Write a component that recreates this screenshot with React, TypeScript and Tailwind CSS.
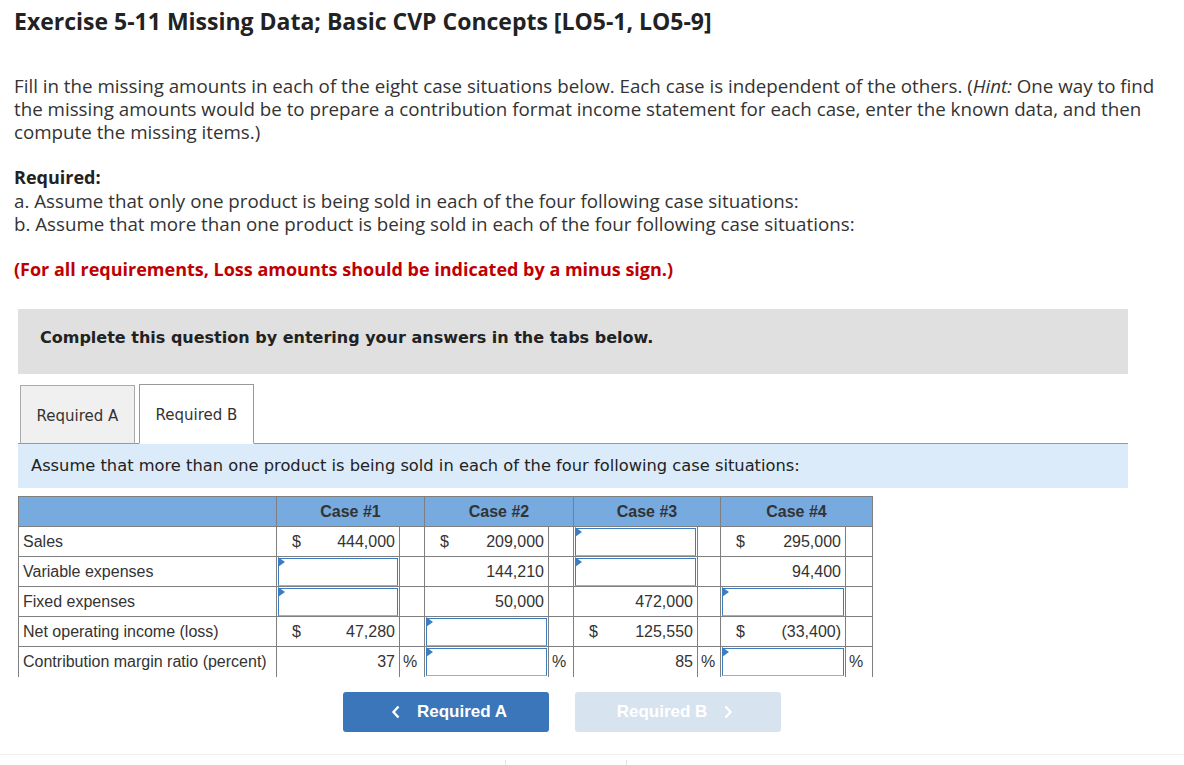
import React from "react";

type Cell =
  | { kind: "val"; dollar?: boolean; text: string }
  | { kind: "input" }
  | { kind: "pct"; text: string }
  | { kind: "blank" };

type Row = { label: string; strong?: boolean; cells: Cell[] };

// each case: [main cell, side cell]
const rows: Row[] = [
  {
    label: "Sales",
    cells: [
      { kind: "val", dollar: true, text: "444,000" }, { kind: "blank" },
      { kind: "val", dollar: true, text: "209,000" }, { kind: "blank" },
      { kind: "input" }, { kind: "blank" },
      { kind: "val", dollar: true, text: "295,000" }, { kind: "blank" },
    ],
  },
  {
    label: "Variable expenses",
    cells: [
      { kind: "input" }, { kind: "blank" },
      { kind: "val", text: "144,210" }, { kind: "blank" },
      { kind: "input" }, { kind: "blank" },
      { kind: "val", text: "94,400" }, { kind: "blank" },
    ],
  },
  {
    label: "Fixed expenses",
    cells: [
      { kind: "input" }, { kind: "blank" },
      { kind: "val", text: "50,000" }, { kind: "blank" },
      { kind: "val", text: "472,000" }, { kind: "blank" },
      { kind: "input" }, { kind: "blank" },
    ],
  },
  {
    label: "Net operating income (loss)",
    strong: true,
    cells: [
      { kind: "val", dollar: true, text: "47,280" }, { kind: "blank" },
      { kind: "input" }, { kind: "blank" },
      { kind: "val", dollar: true, text: "125,550" }, { kind: "blank" },
      { kind: "val", dollar: true, text: "(33,400)" }, { kind: "blank" },
    ],
  },
  {
    label: "Contribution margin ratio (percent)",
    strong: true,
    cells: [
      { kind: "val", text: "37" }, { kind: "pct", text: "%" },
      { kind: "input" }, { kind: "pct", text: "%" },
      { kind: "val", text: "85" }, { kind: "pct", text: "%" },
      { kind: "input" }, { kind: "pct", text: "%" },
    ],
  },
];

const colWidths = ["w-[258px]", "w-[123px]", "w-[25px]", "w-[124px]", "w-[25px]", "w-[124px]", "w-[23px]", "w-[125px]", "w-[27px]"];

function InputBox() {
  return (
    <div className="relative h-[28px] mx-px border-[1.5px] border-[#3c7dc1] border-b-[#8fb3d9] bg-white">
      <span className="absolute -left-[1.5px] -top-[1.5px] w-0 h-0 border-t-[5px] border-b-[5px] border-l-[7px] border-t-transparent border-b-transparent border-l-[#3c7dc1]" />
    </div>
  );
}

function ValueCell({ cell }: { cell: Cell }) {
  if (cell.kind === "input") return <InputBox />;
  if (cell.kind === "val")
    return (
      <div className="flex justify-between items-center pl-[15px] pr-[4px]">
        <span>{cell.dollar ? "$" : ""}</span>
        <span>{cell.text}</span>
      </div>
    );
  if (cell.kind === "pct") return <div className="pl-[3px]">{cell.text}</div>;
  return null;
}

function CaseTable() {
  return (
    <table className="border-collapse table-fixed w-[854px] ml-[18px] font-['Liberation_Sans',Arial,sans-serif] text-[16px] text-[#333]">
      <colgroup>
        {colWidths.map((w, i) => (
          <col key={i} className={w} />
        ))}
      </colgroup>
      <thead>
        <tr className="h-[30px] bg-[#77aadf]">
          <th className="border border-[#7f7f7f]" />
          {["Case #1", "Case #2", "Case #3", "Case #4"].map((c) => (
            <th key={c} colSpan={2} className="border border-[#7f7f7f] font-bold text-[16px] text-[#333]">
              {c}
            </th>
          ))}
        </tr>
      </thead>
      <tbody>
        {rows.map((r, ri) => (
          <tr key={r.label} className="h-[30px]">
            <td
              className={`border-l border-r border-[#7f7f7f] pl-[4px] whitespace-nowrap ${
                ri === rows.length - 1 ? "" : "border-b"
              } border-t border-t-[#7f7f7f]`}
            >
              {r.label}
            </td>
            {r.cells.map((c, ci) => (
              <td
                key={ci}
                className={`p-0 border-l border-r border-[#7f7f7f] ${
                  ri === rows.length - 1 ? "" : "border-b"
                } ${r.strong ? "border-t border-t-black" : "border-t border-t-[#7f7f7f]"}`}
              >
                <ValueCell cell={c} />
              </td>
            ))}
          </tr>
        ))}
      </tbody>
    </table>
  );
}

export default function App() {
  return (
    <div className="w-[1184px] h-[765px] bg-white overflow-hidden relative">
      <div className="px-[14px] pt-[6px] font-['Open_Sans','Lato',sans-serif] text-[#333] whitespace-nowrap">
        <h1 className="text-[23px] font-bold text-[#222] leading-[30px]">
          Exercise 5-11 Missing Data; Basic CVP Concepts [LO5-1, LO5-9]
        </h1>
        <p className="mt-[38px] text-[18.75px] leading-[23px]">
          Fill in the missing amounts in each of the eight case situations below. Each case is independent of the others. (<i>Hint:</i> One way to find
          <br />
          the missing amounts would be to prepare a contribution format income statement for each case, enter the known data, and then
          <br />
          compute the missing items.)
        </p>
        <p className="mt-[23px] text-[18px] leading-[23px] font-bold text-[#222]">Required:</p>
        <p className="text-[18.75px] leading-[23px]">a. Assume that only one product is being sold in each of the four following case situations:</p>
        <p className="text-[18.75px] leading-[23px]">b. Assume that more than one product is being sold in each of the four following case situations:</p>
        <p className="mt-[23px] text-[18px] leading-[23px] font-bold text-[#c00000]">
          (For all requirements, Loss amounts should be indicated by a minus sign.)
        </p>
      </div>

      <div className="mt-[28px] ml-[18px] w-[1110px] h-[65px] bg-[#e0e0e0] flex items-center pl-[22px] pb-[8px] font-['DejaVu_Sans',Verdana,sans-serif] font-bold text-[16px] text-[#222]">
        Complete this question by entering your answers in the tabs below.
      </div>

      <div className="mt-[10px] ml-[18px] w-[1110px] flex items-end border-b border-[#999] font-['DejaVu_Sans',Verdana,sans-serif] text-[15px] text-[#333]">
        <div className="ml-[2px] w-[115px] h-[59px] -mb-px flex items-center justify-center pt-[3px] bg-[#f0f0f0] border border-[#aaa] border-b-[#999]">
          Required A
        </div>
        <div className="ml-[4px] w-[115px] h-[60px] -mb-px flex items-center justify-center pt-[3px] bg-white border border-[#999] border-b-white">
          Required B
        </div>
      </div>

      <div className="ml-[18px] w-[1110px] h-[44px] bg-[#dbebf9] flex items-center pl-[13px] font-['DejaVu_Sans',Verdana,sans-serif] text-[16.3px] text-[#222]">
        Assume that more than one product is being sold in each of the four following case situations:
      </div>

      <div className="mt-[8px]">
        <CaseTable />
      </div>

      <div className="mt-[15px] flex gap-[26px] pl-[343px] font-['Liberation_Sans',Arial,sans-serif] font-bold text-[17px] text-white">
        <button className="w-[206px] h-[40px] rounded-[3px] bg-[#3a76b9] flex items-center justify-center gap-[16px] pl-[6px]">
          <svg width="10" height="14" viewBox="0 0 10 14" fill="none" stroke="white" strokeWidth="2.4">
            <path d="M7.5 1.5 L2.5 7 L7.5 12.5" />
          </svg>
          <span>Required A</span>
        </button>
        <button className="w-[206px] h-[40px] rounded-[3px] bg-[#d8e3f0] flex items-center justify-center gap-[16px] pr-[6px]">
          <span>Required B</span>
          <svg width="10" height="14" viewBox="0 0 10 14" fill="none" stroke="white" strokeWidth="2.4">
            <path d="M2.5 1.5 L7.5 7 L2.5 12.5" />
          </svg>
        </button>
      </div>

      <div className="absolute left-0 right-0 top-[754px] border-t border-[#eeeeee]" />
      <div className="absolute left-[505px] top-[760px] h-[5px] border-l border-[#e5e5e5]" />
      <div className="absolute left-[626px] top-[760px] h-[5px] border-l border-[#e5e5e5]" />
    </div>
  );
}
